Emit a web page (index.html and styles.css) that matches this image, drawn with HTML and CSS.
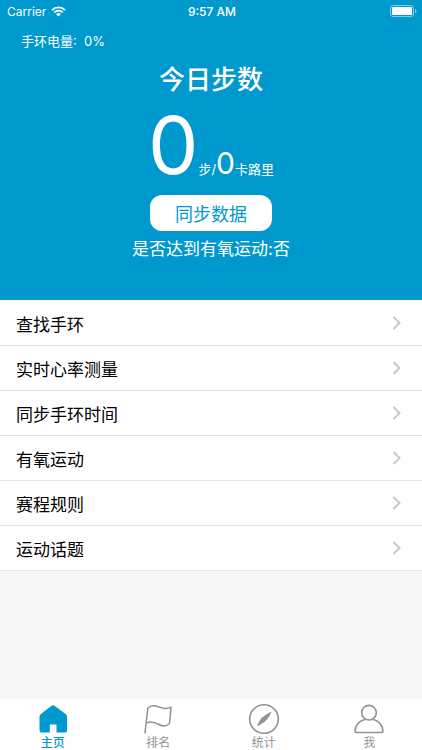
FILE: index.html
```html
<!DOCTYPE html>
<html lang="zh-CN">
<head>
<meta charset="utf-8">
<meta name="viewport" content="width=device-width, initial-scale=1">
<title>主页</title>
<link rel="stylesheet" href="styles.css">
</head>
<body>
<header class="hero">
  <div class="status">
    <div class="carrier">
      <span>Carrier</span>
      <svg class="wifi" viewBox="0 0 15 11" aria-hidden="true">
        <path d="M1 4.100a9.300 9.300 0 0 1 13 0M3.200 6.400a6.100 6.100 0 0 1 8.600 0" fill="none" stroke="currentColor" stroke-width="1.800"/>
        <path d="M7.500 10.600 5.100 8.200a3.400 3.400 0 0 1 4.800 0z" fill="currentColor"/>
      </svg>
    </div>
    <time class="clock">9:57 AM</time>
    <div class="battery">
      <svg viewBox="0 0 27 12" aria-hidden="true">
        <rect x=".5" y=".5" width="23" height="11" rx="2.500" fill="none" stroke="#fff" stroke-opacity=".5"/>
        <rect x="2" y="2" width="20" height="8" rx="1" fill="#fff"/>
        <path d="M25 4v4q1.500-.6 1.500-2T25 4z" fill="#fff" fill-opacity=".5"/>
      </svg>
    </div>
  </div>
  <p class="power">手环电量:&nbsp; 0%</p>
  <h1 class="title">今日步数</h1>
  <p class="counts"><span class="steps">0</span><span>步/</span><span class="calories">0</span><span>卡路里</span></p>
  <button class="sync" type="button">同步数据</button>
  <p class="aerobic">是否达到有氧运动:否</p>
</header>
<main class="menu">
  <a class="row" href="#find"><span>查找手环</span><svg class="chevron" viewBox="0 0 10 14" aria-hidden="true"><path d="m1.500 1 6 6-6 6"/></svg></a>
  <a class="row" href="#heart"><span>实时心率测量</span><svg class="chevron" viewBox="0 0 10 14" aria-hidden="true"><path d="m1.500 1 6 6-6 6"/></svg></a>
  <a class="row" href="#time"><span>同步手环时间</span><svg class="chevron" viewBox="0 0 10 14" aria-hidden="true"><path d="m1.500 1 6 6-6 6"/></svg></a>
  <a class="row" href="#aerobic"><span>有氧运动</span><svg class="chevron" viewBox="0 0 10 14" aria-hidden="true"><path d="m1.500 1 6 6-6 6"/></svg></a>
  <a class="row" href="#rules"><span>赛程规则</span><svg class="chevron" viewBox="0 0 10 14" aria-hidden="true"><path d="m1.500 1 6 6-6 6"/></svg></a>
  <a class="row" href="#topics"><span>运动话题</span><svg class="chevron" viewBox="0 0 10 14" aria-hidden="true"><path d="m1.500 1 6 6-6 6"/></svg></a>
</main>
<nav class="tabs">
  <a class="tab active" href="#home">
    <svg viewBox="0 0 32 32" aria-hidden="true"><path d="M14.600 2.700Q16 1.700 17.400 2.700L28.600 11Q30 12 30 13.800V27.500Q30 29.500 28 29.500H19.500V21.500H12.800V29.500H4.500Q2.500 29.500 2.500 27.500V13.800Q2.500 12 3.900 11z" fill="currentColor"/></svg>
    <span>主页</span>
  </a>
  <a class="tab" href="#rank">
    <svg viewBox="0 0 32 32" aria-hidden="true"><path d="M3 30 5.800 5.200C9 1.800 12.500 2.300 16 3.700S23.500 7 29 4.200L27.500 20.500C24.500 23.500 21 23.600 17 21.500S8.500 17.800 4.600 20.200" fill="none" stroke="currentColor" stroke-width="1.500" stroke-linecap="round" stroke-linejoin="round"/></svg>
    <span>排名</span>
  </a>
  <a class="tab" href="#stats">
    <svg viewBox="0 0 32 32" aria-hidden="true"><circle cx="16" cy="16" r="14.300" fill="none" stroke="currentColor" stroke-width="1.600"/><path d="M23.500 8.800C20.500 9.800 14 14.300 12.600 16.200S9.600 21.500 9 23.300C12 22.300 18 18 19.400 16S22.600 11 23.500 8.800z" fill="currentColor"/></svg>
    <span>统计</span>
  </a>
  <a class="tab" href="#me">
    <svg viewBox="0 0 32 32" aria-hidden="true"><g fill="none" stroke="currentColor" stroke-width="1.600" stroke-linejoin="round"><circle cx="16" cy="9.700" r="7.300"/><path d="M11.700 16.500C6 18.200 2.500 22.500 2 28Q2 29.500 3.500 29.500H28.500Q30 29.500 30 28C29.500 22.500 26 18.200 20.300 16.500"/></g></svg>
    <span>我</span>
  </a>
</nav>
</body>
</html>
```
FILE: styles.css
```css
* {
  box-sizing: border-box;
}

body {
  margin: 0;
  min-height: 100vh;
  display: flex;
  flex-direction: column;
  background: #f7f7f7;
  color: #000;
  font-family: Inter, "Noto Sans CJK SC", sans-serif;
}

p,
h1 {
  margin: 0;
}

a {
  color: inherit;
  text-decoration: none;
}

.hero {
  display: flex;
  flex-direction: column;
  align-items: center;
  padding-bottom: 37px;
  background: #0099ce;
  color: #fff;
}

.status {
  align-self: stretch;
  display: grid;
  grid-template-columns: 1fr auto 1fr;
  align-items: center;
  height: 22px;
  padding: 0 5px 0 7px;
  font-size: 12px;
}

.carrier {
  display: flex;
  align-items: center;
  gap: 5px;
}

.wifi {
  width: 15px;
  height: 11px;
}

.clock {
  font-weight: 500;
}

.battery {
  display: flex;
  justify-content: flex-end;
}

.battery svg {
  width: 27px;
  height: 12px;
}

.power {
  align-self: flex-start;
  padding: 9px 21px 0;
  font-size: 13px;
  line-height: 20px;
}

.title {
  margin-top: 10px;
  font-size: 26px;
  font-weight: 500;
  line-height: 38px;
}

.counts {
  display: flex;
  align-items: baseline;
  margin-bottom: 4px;
  font-size: 13px;
  line-height: 20px;
}

.steps {
  font-size: 80px;
  line-height: 92px;
}

.calories {
  font-size: 30px;
}

.sync {
  width: 122px;
  height: 36px;
  padding: 0;
  border: 0;
  border-radius: 12px;
  background: #fff;
  color: #0099ce;
  font: inherit;
  font-size: 18px;
}

.aerobic {
  margin-top: 4px;
  font-size: 17px;
  line-height: 28px;
}

.menu {
  padding-top: 1px;
  background: #fff;
}

.row {
  display: flex;
  align-items: center;
  justify-content: space-between;
  height: 45px;
  padding: 0 20px 0 16px;
  border-bottom: 1px solid #e5e5e7;
  font-size: 17px;
}

.chevron {
  width: 10px;
  height: 14px;
  fill: none;
  stroke: #c7c7cc;
  stroke-width: 2;
}

.tabs {
  display: flex;
  height: 51px;
  margin-top: auto;
  padding-top: 4px;
  background: #fff;
}

.tab {
  flex: 1;
  display: flex;
  flex-direction: column;
  align-items: center;
  color: #929292;
  font-size: 12px;
  line-height: 16px;
}

.tab svg {
  width: 32px;
  height: 32px;
  flex: none;
}

.active {
  color: #0099ce;
  font-weight: 500;
}
```
